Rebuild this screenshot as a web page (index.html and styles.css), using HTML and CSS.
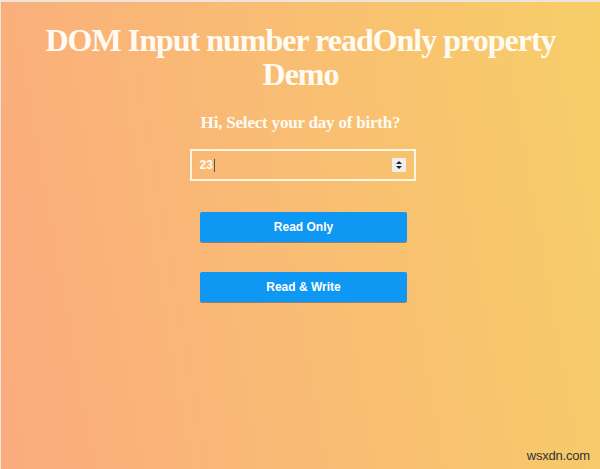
FILE: index.html
```html
<!DOCTYPE html>
<html>
<head>
<meta charset="utf-8">
<link rel="stylesheet" href="styles.css">
</head>
<body>
<div class="page">
  <h1 class="title">DOM Input number readOnly property Demo</h1>
  <p class="question">Hi, Select your day of birth?</p>
  <div class="field">
    <span class="value">23</span><span class="caret"></span>
    <span class="spacer"></span>
    <span class="spin">
      <svg width="14" height="14" viewBox="0 0 14 14">
        <rect x="0" y="0" width="14" height="14" rx="1" fill="#efefef"/>
        <path d="M4 6 L7 3 L10 6 Z" fill="#222"/>
        <path d="M4 8 L7 11 L10 8 Z" fill="#222"/>
      </svg>
    </span>
  </div>
  <div class="buttons">
    <button class="btn">Read Only</button>
    <button class="btn">Read &amp; Write</button>
  </div>
  <div class="watermark">wsxdn.com</div>
</div>
</body>
</html>
```
FILE: styles.css
```css
html, body {
  margin: 0;
  padding: 0;
  height: 100%;
}
body {
  background: #ede5dc;
}
.page {
  position: relative;
  box-sizing: border-box;
  margin-top: 2px;
  margin-left: 1px;
  height: 467px;
  background: linear-gradient(80deg, #fbab7e 0%, #f7ce68 100%);
  display: flex;
  flex-direction: column;
  align-items: center;
  padding-top: 21px;
  font-family: "Liberation Serif", "Times New Roman", serif;
  color: #fffbf2;
}
.title {
  margin: 0;
  width: 560px;
  text-align: center;
  font-size: 32px;
  line-height: 34px;
  font-weight: bold;
  letter-spacing: -1px;
}
.question {
  margin: 23px 0 0 0;
  font-size: 17px;
  line-height: 18px;
  font-weight: bold;
  letter-spacing: -0.2px;
}
.field {
  margin-top: 17px;
  margin-left: 4px;
  box-sizing: border-box;
  width: 226px;
  height: 32px;
  border: 2px solid #fff6e0;
  display: flex;
  align-items: center;
  padding: 0 8px 0 8px;
  font-family: "Liberation Sans", Arial, sans-serif;
  font-size: 12px;
  font-weight: bold;
  color: #fffbf2;
}
.caret {
  display: inline-block;
  width: 1px;
  height: 13px;
  background: #555;
  margin-left: 1px;
}
.spacer {
  flex: 1;
}
.spin {
  display: flex;
}
.buttons {
  margin-top: 31px;
  margin-left: 6px;
  display: flex;
  flex-direction: column;
  gap: 30px;
}
.btn {
  width: 207px;
  height: 30px;
  border: none;
  border-radius: 2px;
  background: #0f97f4;
  box-shadow: 0 1px 0 rgba(40, 70, 110, 0.5);
  color: #ffffff;
  font-family: "Liberation Sans", Arial, sans-serif;
  font-size: 12px;
  font-weight: bold;
  padding: 0;
}
.watermark {
  position: absolute;
  right: 10px;
  bottom: 6px;
  font-family: "Liberation Sans", Arial, sans-serif;
  font-size: 13px;
  color: #333;
  letter-spacing: -0.2px;
}
```
